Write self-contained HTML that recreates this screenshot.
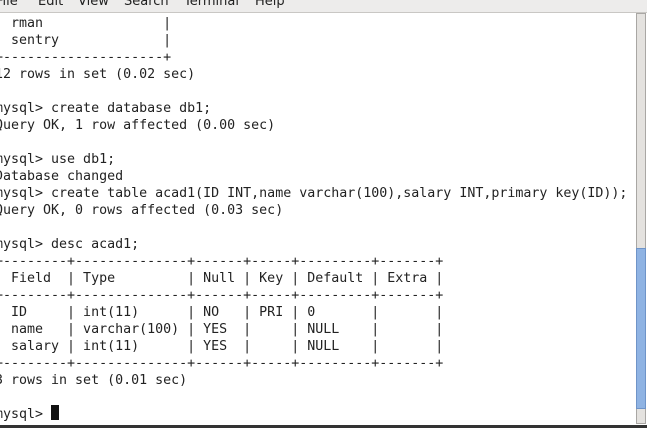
<!DOCTYPE html>
<html><head><meta charset="utf-8"><style>
html,body{margin:0;padding:0;width:647px;height:428px;overflow:hidden;background:#fff;position:relative}
#menu{position:absolute;left:0;top:0;width:647px;height:12px;background:#edeceb;border-bottom:1px solid #c9c7c4;overflow:hidden}
#menu span{position:absolute;top:-6px;font:13px "DejaVu Sans","Liberation Sans",sans-serif;color:#222}
#term{position:absolute;left:-5px;top:15px;margin:0;font:13.3px/17px "DejaVu Sans Mono","Liberation Mono",monospace;color:#222;white-space:pre}
#sb{position:absolute;left:636px;top:13px;width:10px;height:411px;background:#e4e2df;border:1px solid #a9a7a4;box-sizing:border-box}
#thumb{position:absolute;left:636px;top:248px;width:10px;height:161px;background:#8fb3e3;border:1px solid #6f94c8;box-sizing:border-box}
#cur{position:absolute;left:51px;top:405px;width:8px;height:15px;background:#111}
#bot{position:absolute;left:0;top:425px;width:647px;height:3px;background:#333}
</style></head><body>
<div id="menu"><span style="left:-4px">File</span><span style="left:38px">Edit</span><span style="left:78px">View</span><span style="left:124px">Search</span><span style="left:184px">Terminal</span><span style="left:255px">Help</span></div>
<pre id="term">| rman               |
| sentry             |
+--------------------+
12 rows in set (0.02 sec)

mysql> create database db1;
Query OK, 1 row affected (0.00 sec)

mysql> use db1;
Database changed
mysql> create table acad1(ID INT,name varchar(100),salary INT,primary key(ID));
Query OK, 0 rows affected (0.03 sec)

mysql> desc acad1;
+--------+--------------+------+-----+---------+-------+
| Field  | Type         | Null | Key | Default | Extra |
+--------+--------------+------+-----+---------+-------+
| ID     | int(11)      | NO   | PRI | 0       |       |
| name   | varchar(100) | YES  |     | NULL    |       |
| salary | int(11)      | YES  |     | NULL    |       |
+--------+--------------+------+-----+---------+-------+
3 rows in set (0.01 sec)

mysql> </pre>
<div id="cur"></div>
<div id="sb"></div><div id="thumb"></div>
<div id="bot"></div>
</body></html>
